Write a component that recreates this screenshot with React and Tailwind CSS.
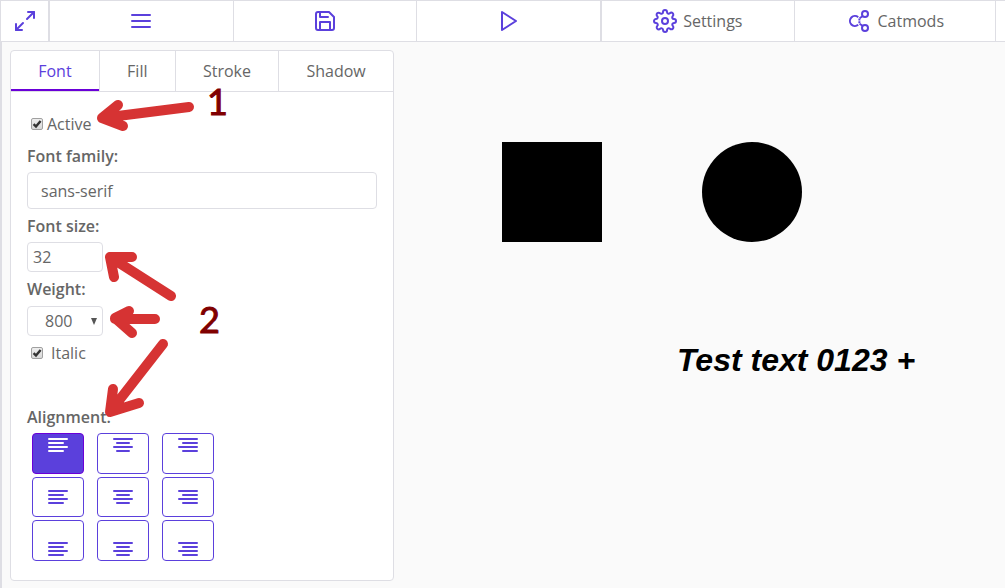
import { useState } from "react";
import { FiMaximize2, FiMenu, FiPlay, FiSave, FiSettings } from "react-icons/fi";

const ROWS = ["items-start", "items-center", "items-end"];
const COLS = ["left", "center", "right"];
const LINES = {
  left: "M3 6h18M3 10h14M3 14h18M3 18h14",
  center: "M3 6h18M6 10h12M3 14h18M6 18h12",
  right: "M3 6h18M7 10h14M3 14h18M7 18h14",
};

const ARROWS = [
  "M189 107L102 118M118 105L102 118L123 126",
  "M171 296L110 257M132 257H110L114 277",
  "M155 319H115M129 311L115 318L132 333",
  "M163 344L110 412M113 389L110 412L139 403",
];

function CatmodsIcon() {
  return (
    <svg width="24" height="24" viewBox="0 0 24 24" fill="none" stroke="currentColor" strokeWidth="2" aria-hidden="true">
      <path d="M11.2 8.2A5 5 0 1 0 11.2 15.8" />
      <path d="M12.4 9.6v4.8" strokeDasharray="2 0.6" />
      <circle cx="18" cy="5" r="3" />
      <circle cx="18" cy="19" r="3" />
      <path d="M12.6 9.2L15.8 7M12.6 14.8L15.8 17" />
    </svg>
  );
}

function Check({ id }) {
  return (
    <span className="grid size-3 shrink-0">
      <input
        id={id}
        type="checkbox"
        defaultChecked
        className="peer col-start-1 row-start-1 m-0 size-3 appearance-none rounded-[2px] border border-[#a0a0a0] bg-linear-to-b from-[#eeeeee] to-[#d8d8d8]"
      />
      <svg
        viewBox="0 0 13 13"
        className="pointer-events-none invisible col-start-1 row-start-1 size-3 peer-checked:visible"
        fill="none"
        stroke="#333"
        strokeWidth="2.6"
        aria-hidden="true"
      >
        <path d="M2.8 6.6L5.4 9.2L10.4 3.2" />
      </svg>
    </span>
  );
}

function ToolButton({ label, className, children }) {
  return (
    <button type="button" aria-label={label} className={`flex items-center justify-center border-[#dedee4] text-[#5b40dc] ${className}`}>
      {children}
    </button>
  );
}

export default function App() {
  const [tab, setTab] = useState("Font");
  const [align, setAlign] = useState("0-left");

  return (
    <div className="relative flex min-h-screen flex-col overflow-hidden bg-[#fafafa] font-['Open_Sans',sans-serif] text-base text-[#666]">
      <header className="flex h-[42px] border-y border-l border-[#dedee4] bg-white">
        <ToolButton label="Fullscreen" className="w-12 border-r">
          <FiMaximize2 size={24} />
        </ToolButton>
        <ToolButton label="Menu" className="flex-1 border-l">
          <FiMenu size={24} />
        </ToolButton>
        <ToolButton label="Save" className="flex-1 border-l">
          <FiSave size={24} />
        </ToolButton>
        <ToolButton label="Play" className="flex-1 border-x">
          <FiPlay size={24} />
        </ToolButton>
        <ToolButton className="gap-1.5 border-x pr-[52px] pl-[51px]">
          <FiSettings size={24} />
          <span className="text-[#666]">Settings</span>
        </ToolButton>
        <ToolButton className="gap-1.5 border-r pr-[51px] pl-[52px]">
          <CatmodsIcon />
          <span className="text-[#666]">Catmods</span>
        </ToolButton>
        <div className="w-[9px]" />
      </header>

      <div className="flex flex-1 border-l-2 border-[#dedee4]">
        <aside className="my-2 ml-2 w-96 shrink-0 self-start rounded border border-[#dedee4] bg-white">
          <nav className="flex h-[41px] border-b border-[#dedee4]">
            {["Font", "Fill", "Stroke", "Shadow"].map((name) => (
              <button
                key={name}
                type="button"
                onClick={() => setTab(name)}
                className={`flex-auto border-r border-[#dedee4] px-6 last:border-r-0 ${
                  tab === name ? "text-[#5b40dc] shadow-[inset_0_-2px_0_#6a00d8]" : ""
                }`}
              >
                {name}
              </button>
            ))}
          </nav>

          <form className="flex flex-col px-4 pt-4 pb-[19px]">
            <label htmlFor="active" className="flex h-8 items-center gap-1 pl-1">
              <Check id="active" />
              Active
            </label>
            <label htmlFor="family" className="flex h-8 items-center font-semibold">
              Font family:
            </label>
            <input id="family" type="text" defaultValue="sans-serif" className="h-[37px] rounded border border-[#dedee4] bg-white px-[13px]" />
            <label htmlFor="size" className="flex h-[33px] items-center font-semibold">
              Font size:
            </label>
            <input id="size" type="text" inputMode="numeric" defaultValue="32" className="h-[30px] w-[76px] rounded border border-[#dedee4] bg-white px-[5px]" />
            <label htmlFor="weight" className="flex h-[34px] items-center font-semibold">
              Weight:
            </label>
            <div className="grid w-[76px] items-center">
              <select id="weight" defaultValue="800" className="col-start-1 row-start-1 h-[30px] appearance-none rounded border border-[#dedee4] bg-white pl-[17px]">
                <option>400</option>
                <option>600</option>
                <option>800</option>
              </select>
              <svg width="6" height="7" viewBox="0 0 6 7" className="pointer-events-none col-start-1 row-start-1 mr-1.5 justify-self-end" fill="#555" aria-hidden="true">
                <path d="M0 0h6L3 7z" />
              </svg>
            </div>
            <label htmlFor="italic" className="flex h-[34px] items-center gap-2 pl-1">
              <Check id="italic" />
              Italic
            </label>
            <div className="mt-[31px] flex h-8 items-center font-semibold">Alignment:</div>
            <div className="ml-[5px] grid grid-cols-[repeat(3,52px)] grid-rows-[41px_40px_41px] gap-x-[13px] gap-y-[3px]">
              {ROWS.map((row, i) =>
                COLS.map((col) => {
                  const key = `${i}-${col}`;
                  return (
                    <button
                      key={key}
                      type="button"
                      aria-label={`Align ${key}`}
                      onClick={() => setAlign(key)}
                      className={`flex justify-center rounded border py-1 ${row} ${
                        align === key ? "border-[#6a00d8] bg-[#5b40dc] text-white" : "border-[#5b40dc] bg-white text-[#5b40dc]"
                      }`}
                    >
                      <svg width="20" height="14" viewBox="2 5 20 14" fill="none" stroke="currentColor" strokeWidth="2" strokeLinecap="round" aria-hidden="true">
                        <path d={LINES[col]} />
                      </svg>
                    </button>
                  );
                }),
              )}
            </div>
          </form>
        </aside>

        <main className="relative flex-1">
          <div className="absolute top-[100px] left-[108px] size-[100px] bg-black" />
          <div className="absolute top-[100px] left-[308px] size-[100px] rounded-full bg-black" />
          <div className="absolute top-[300px] left-[283px] font-['Liberation_Sans',sans-serif] text-[32px] leading-9 font-extrabold whitespace-nowrap text-black italic">
            Test text 0123 +
          </div>
        </main>
      </div>

      <svg className="pointer-events-none absolute top-0 left-0" width="240" height="430" fill="none" stroke="#d63333" strokeWidth="10" strokeLinecap="round" strokeLinejoin="round" aria-hidden="true">
        {ARROWS.map((d) => (
          <path key={d} d={d} />
        ))}
      </svg>
      <span className="absolute top-[81px] left-[207px] font-['Lato',sans-serif] text-[36px] leading-10 text-[#800000] [-webkit-text-stroke:1px_#800000]">1</span>
      <span className="absolute top-[299px] left-[199px] font-['Lato',sans-serif] text-[36px] leading-10 text-[#800000] [-webkit-text-stroke:1px_#800000]">2</span>
    </div>
  );
}
